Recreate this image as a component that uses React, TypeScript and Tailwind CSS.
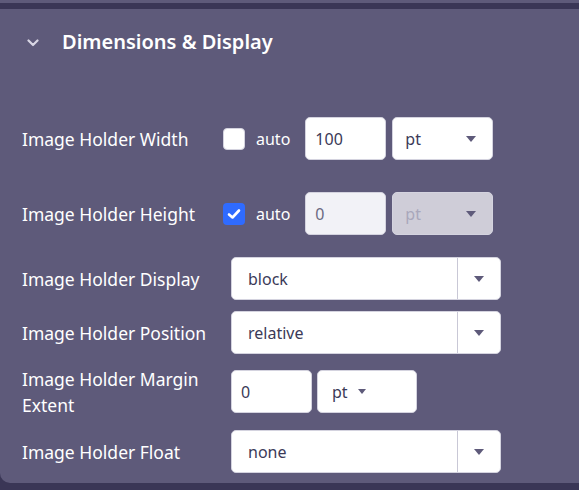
import React from "react";

const font = { fontFamily: "'Noto Sans', 'Open Sans', sans-serif" };

const Arrow: React.FC<{ className?: string; small?: boolean }> = ({ className, small }) => (
	<svg width={small ? 8 : 10} height={small ? 5 : 6} viewBox="0 0 10 6" className={className}>
		<path d="M0 0 L10 0 L5 6 Z" fill="currentColor" />
	</svg>
);

const Checkbox: React.FC<{ checked?: boolean }> = ({ checked }) =>
	checked ? (
		<div className="w-[22px] h-[22px] rounded-[4px] bg-[#2f6bff] flex items-center justify-center">
			<svg width="14" height="12" viewBox="0 0 14 12">
				<path
					d="M2 6.5 L5.5 9.5 L12 2.5"
					stroke="white"
					strokeWidth="2.6"
					fill="none"
					strokeLinecap="round"
					strokeLinejoin="round"
				/>
			</svg>
		</div>
	) : (
		<div className="w-[22px] h-[22px] rounded-[4px] bg-white border border-[#d4d3df]" />
	);

const NumInput: React.FC<{ value: string; disabled?: boolean }> = ({ value, disabled }) => (
	<div
		className={`w-[81px] h-[43px] rounded-[5px] border border-[#d4d3df] flex items-center pl-[9px] text-[16px] ${
			disabled ? "bg-[#f2f2f7] text-[#6b6a82]" : "bg-white text-[#3b3a58]"
		}`}
	>
		{value}
	</div>
);

const UnitSelect: React.FC<{ disabled?: boolean; small?: boolean }> = ({ disabled, small }) => (
	<div
		className={`${small ? "w-[100px] pl-[14px] pr-[50px]" : "w-[101px] pl-[12px] pr-[16px]"} h-[43px] rounded-[5px] border border-[#d4d3df] flex items-center justify-between text-[16px] ${
			disabled ? "bg-[#cfcdd8] text-[#a9a7bb]" : "bg-white text-[#3b3a58]"
		}`}
	>
		<span>pt</span>
		<Arrow small={small} className="text-[#5e5a7a]" />
	</div>
);

const WideSelect: React.FC<{ value: string }> = ({ value }) => (
	<div className="w-[270px] h-[43px] rounded-[5px] border border-[#d4d3df] bg-white flex items-center text-[16px] text-[#3b3a58]">
		<span className="flex-1 pl-[16px]">{value}</span>
		<div className="w-[43px] h-full border-l border-[#c9c8d6] flex items-center justify-center">
			<Arrow className="text-[#5e5a7a]" />
		</div>
	</div>
);

const Label: React.FC<{ w: string; children: React.ReactNode }> = ({ w, children }) => (
	<div className={`${w} text-[17.5px] text-white leading-[26px]`}>{children}</div>
);

export default function App() {
	return (
		<div className="w-[579px] h-[490px] bg-[#3a3656] overflow-hidden relative" style={font}>
			<div className="h-[3px] bg-[#5e5a7a]" />
			<div className="mt-[6px] w-[600px] h-[474px] bg-[#5e5a7a] rounded-bl-[10px] flex flex-col">
				<div className="h-[66px] flex items-center">
					<svg width="12" height="8" viewBox="0 0 12 8" className="ml-[27px] mt-[1px]">
						<path
							d="M1.5 1.5 L6 6 L10.5 1.5"
							stroke="#d8d6e4"
							strokeWidth="2.2"
							fill="none"
							strokeLinecap="round"
							strokeLinejoin="round"
						/>
					</svg>
					<div className="ml-[23px] text-[20px] font-semibold text-white">
						Dimensions &amp; Display
					</div>
				</div>

				<div className="flex items-center pl-[22px] mt-[42px] h-[43px]">
					<Label w="w-[201px]">Image Holder Width</Label>
					<Checkbox />
					<span className="ml-[11px] text-[16px] text-white">auto</span>
					<div className="ml-[15px] flex gap-[6px]">
						<NumInput value="100" />
						<UnitSelect />
					</div>
				</div>

				<div className="flex items-center pl-[22px] mt-[32px] h-[43px]">
					<Label w="w-[201px]">Image Holder Height</Label>
					<Checkbox checked />
					<span className="ml-[11px] text-[16px] text-white">auto</span>
					<div className="ml-[15px] flex gap-[6px]">
						<NumInput value="0" disabled />
						<UnitSelect disabled />
					</div>
				</div>

				<div className="flex items-center pl-[22px] mt-[22px] h-[43px]">
					<Label w="w-[209px]">Image Holder Display</Label>
					<WideSelect value="block" />
				</div>

				<div className="flex items-center pl-[22px] mt-[11px] h-[43px]">
					<Label w="w-[209px]">Image Holder Position</Label>
					<WideSelect value="relative" />
				</div>

				<div className="flex items-center pl-[22px] mt-[16px] h-[43px]">
					<Label w="w-[209px]">
						Image Holder Margin
						<br />
						Extent
					</Label>
					<div className="flex gap-[5px]">
						<NumInput value="0" />
						<UnitSelect small />
					</div>
				</div>

				<div className="flex items-center pl-[22px] mt-[17px] h-[43px]">
					<Label w="w-[209px]">Image Holder Float</Label>
					<WideSelect value="none" />
				</div>
			</div>
		</div>
	);
}
